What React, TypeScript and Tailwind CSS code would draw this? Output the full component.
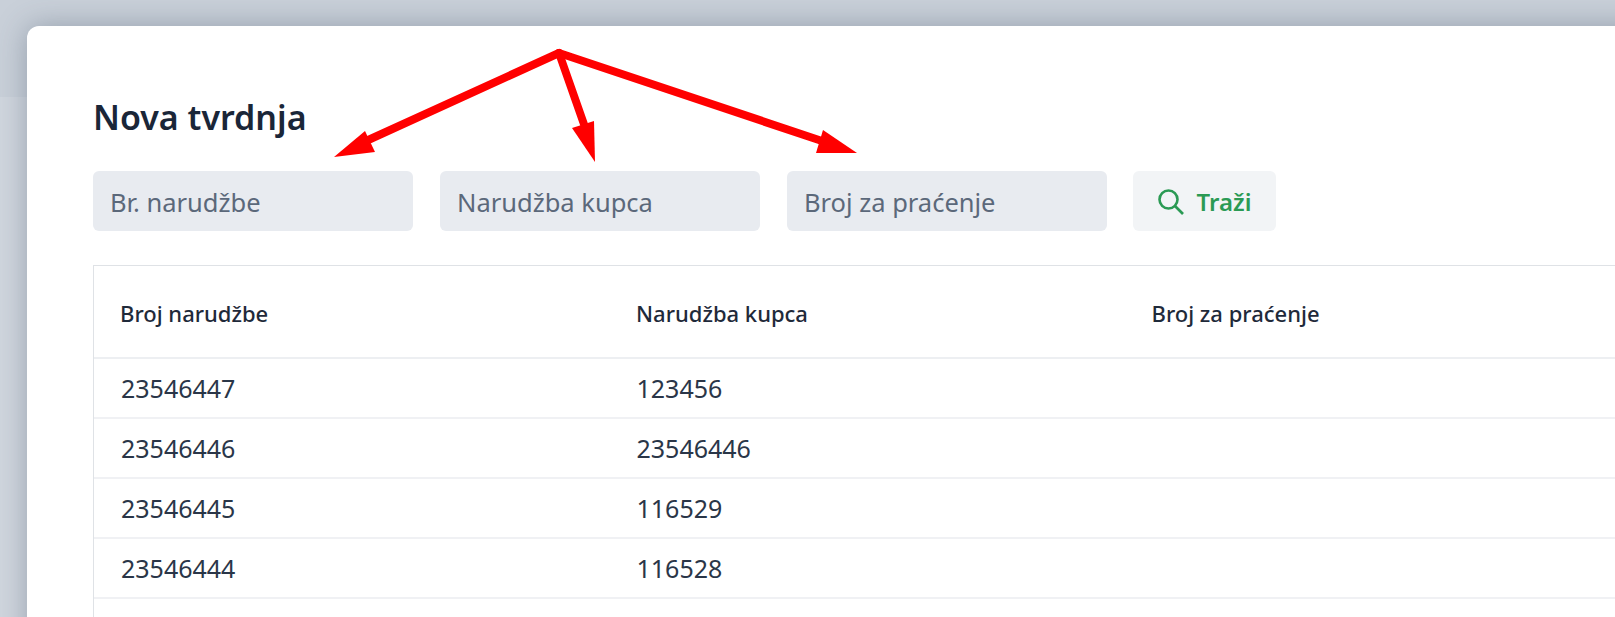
import React from 'react';

const rows = [
  ['23546447', '123456'],
  ['23546446', '23546446'],
  ['23546445', '116529'],
  ['23546444', '116528'],
  ['', ''],
];

const inputClass =
  'h-[60px] w-[320px] rounded-md bg-[#e8ebf0] px-[17px] pt-[2px] text-[25.5px] outline-none placeholder:text-[#5b687a]';

const App: React.FC = () => {
  return (
    <div className="relative h-[617px] overflow-hidden bg-[#d0d6de] font-['Noto_Sans',sans-serif] text-[#1a2433]">
      {/* page behind the modal */}
      <div className="h-[97px] bg-[#c9d0d9]" />

      <div className="absolute bottom-[-40px] left-[27px] right-[-40px] top-[26px] rounded-[12px] bg-white pl-[66px] pt-[71px] shadow-[0_0_30px_rgba(71,85,105,0.4)]">
        <h1 className="text-[34px] font-semibold leading-[40px] text-[#1a2638]">Nova tvrdnja</h1>

        <div className="mt-[34px] flex items-center gap-[27px]">
          <input placeholder="Br. narudžbe" className={inputClass} />
          <input placeholder="Narudžba kupca" className={inputClass} />
          <input placeholder="Broj za praćenje" className={inputClass} />
          <button className="ml-[-1px] flex h-[60px] w-[143px] items-center justify-center gap-[13px] rounded-md bg-[#f2f4f6] pt-[1px] text-[24px] font-semibold text-[#2b9a54]">
            <svg className="h-[26px] w-[26px]" viewBox="0 0 26 26" fill="none" stroke="currentColor" strokeWidth="2.6">
              <circle cx="10.5" cy="10.5" r="9" />
              <path d="M17 17 L25 25" />
            </svg>
            Traži
          </button>
        </div>

        <div className="mt-[34px] border-l border-t border-[#dfe2e6]">
          <div className="flex h-[93px] items-center border-b-2 border-[#edeff2] pl-[26px] pt-[4px] text-[22px] font-medium text-[#1f2a3a]">
            <div className="w-[516px]">Broj narudžbe</div>
            <div className="w-[515.5px]">Narudžba kupca</div>
            <div>Broj za praćenje</div>
          </div>
          {rows.map((r, i) => (
            <div key={i} className="flex h-[60px] items-center border-b-2 border-[#f0f1f4] pl-[27px] pt-[2px] text-[25px] text-[#2a3648]">
              <div className="w-[515.5px]">{r[0]}</div>
              <div className="w-[515.5px]">{r[1]}</div>
            </div>
          ))}
        </div>
      </div>

      {/* annotation arrows */}
      <svg className="absolute left-0 top-0 h-[617px] w-[1615px]" viewBox="0 0 1615 617" fill="none">
        <g stroke="#ff0000" strokeWidth="8" strokeLinecap="round">
          <path d="M559 53 L366 141" />
          <path d="M559 53 L586 130" />
          <path d="M559 53 L825 142" />
        </g>
        <path d="M334 157 L365 131 L375 152 Z" fill="#ff0000" />
        <path d="M595 162 L572 128 L594 121 Z" fill="#ff0000" />
        <path d="M857 153 L816 153 L823 130 Z" fill="#ff0000" />
      </svg>
    </div>
  );
};

export default App;
